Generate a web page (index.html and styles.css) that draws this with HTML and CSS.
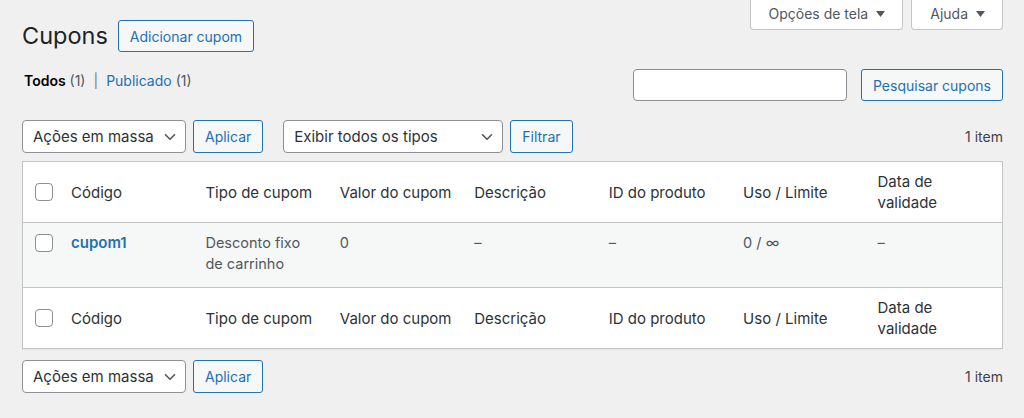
FILE: index.html
```html
<!DOCTYPE html>
<html lang="pt-BR">
<head>
<meta charset="utf-8">
<title>Cupons</title>
<link rel="stylesheet" href="styles.css">
</head>
<body>
<div class="wrap">
  <div class="screen-meta-links">
    <button class="meta-tab">Opções de tela <svg class="tri" width="9" height="6" viewBox="0 0 9 6"><path d="M0 0h9L4.5 6z"/></svg></button>
    <button class="meta-tab">Ajuda <svg class="tri" width="9" height="6" viewBox="0 0 9 6"><path d="M0 0h9L4.5 6z"/></svg></button>
  </div>
  <div class="heading">
    <h1 class="title">Cupons</h1>
    <a class="btn title-action" href="#">Adicionar cupom</a>
  </div>
  <div class="filter-row">
    <ul class="subsubsub">
      <li><span class="current">Todos</span> <span class="count">(1)</span></li>
      <li class="sep">|</li>
      <li><a href="#">Publicado</a> <span class="count">(1)</span></li>
    </ul>
    <div class="search-box">
      <input class="search-input" type="search" aria-label="Pesquisar">
      <button class="btn">Pesquisar cupons</button>
    </div>
  </div>

  <div class="tablenav top">
    <div class="select w-bulk"><span>Ações em massa</span><svg class="chev" width="12" height="8" viewBox="0 0 12 8"><path d="M1.5 1.8 6 6.2l4.5-4.4"/></svg></div>
    <button class="btn">Aplicar</button>
    <div class="select w-type"><span>Exibir todos os tipos</span><svg class="chev" width="12" height="8" viewBox="0 0 12 8"><path d="M1.5 1.8 6 6.2l4.5-4.4"/></svg></div>
    <button class="btn">Filtrar</button>
    <div class="count-items">1 item</div>
  </div>

  <table class="list">
    <colgroup><col class="c-check"><col><col><col><col><col><col><col></colgroup>
    <thead>
      <tr>
        <td class="check"><span class="cb"></span></td>
        <th>Código</th><th>Tipo de cupom</th><th>Valor do cupom</th><th>Descrição</th><th>ID do produto</th><th>Uso / Limite</th><th>Data de validade</th>
      </tr>
    </thead>
    <tbody>
      <tr>
        <td class="check"><span class="cb"></span></td>
        <td><a class="code" href="#">cupom1</a></td>
        <td>Desconto fixo de carrinho</td>
        <td>0</td>
        <td>–</td>
        <td>–</td>
        <td>0 / ∞</td>
        <td>–</td>
      </tr>
    </tbody>
    <tfoot>
      <tr>
        <td class="check"><span class="cb"></span></td>
        <th>Código</th><th>Tipo de cupom</th><th>Valor do cupom</th><th>Descrição</th><th>ID do produto</th><th>Uso / Limite</th><th>Data de validade</th>
      </tr>
    </tfoot>
  </table>

  <div class="tablenav bottom">
    <div class="select w-bulk"><span>Ações em massa</span><svg class="chev" width="12" height="8" viewBox="0 0 12 8"><path d="M1.5 1.8 6 6.2l4.5-4.4"/></svg></div>
    <button class="btn">Aplicar</button>
    <div class="count-items">1 item</div>
  </div>
</div>
</body>
</html>
```
FILE: styles.css
```css
* { box-sizing: border-box; }
html, body { margin: 0; padding: 0; }
body {
  background: #f0f0f1;
  color: #3c434a;
  font-family: Inter, "Noto Sans", "Liberation Sans", sans-serif;
  font-size: 15px;
  line-height: 21px;
  width: 1024px;
  height: 418px;
  overflow: hidden;
}
.wrap { padding: 0 21px 0 22px; }

.screen-meta-links {
  float: right;
  display: flex;
  gap: 8px;
}
.meta-tab {
  display: flex;
  align-items: center;
  gap: 8px;
  height: 30px;
  padding: 0 17px 2px 18px;
  background: #fff;
  border: 1px solid #c3c4c7;
  border-top: none;
  border-radius: 0 0 4px 4px;
  font: inherit;
  font-size: 14px;
  color: #50575e;
}
.meta-tab .tri { fill: #50575e; }

.heading {
  display: flex;
  align-items: center;
  gap: 10px;
  padding-top: 20px;
  height: 52px;
}
.title {
  margin: 0;
  font-size: 23.5px;
  font-weight: 400;
  color: #1d2327;
  line-height: 32px;
}
.btn {
  display: inline-flex;
  align-items: center;
  justify-content: center;
  height: 32px;
  padding: 0 11px;
  border: 1px solid #2271b1;
  border-radius: 3px;
  background: #f6f7f7;
  color: #2271b1;
  font: inherit;
  font-size: 14px;
  text-decoration: none;
  white-space: nowrap;
}

.filter-row {
  display: flex;
  justify-content: space-between;
  align-items: flex-start;
  margin-top: 17px;
}
.subsubsub {
  list-style: none;
  margin: 0;
  padding: 1px 0 0 2px;
  display: flex;
  gap: 6px;
  font-size: 14px;
  line-height: 21px;
}
.subsubsub .current { font-weight: 600; color: #000; }
.subsubsub .count { color: #50575e; }
.subsubsub .sep { color: #787c82; margin: 0 2px; }
.subsubsub a { color: #2271b1; text-decoration: none; }

.search-box { display: flex; gap: 14px; }
.search-input {
  width: 214px;
  height: 32px;
  border: 1px solid #8c8f94;
  border-radius: 4px;
  background: #fff;
  margin: 0;
  padding: 0 8px;
}

.tablenav {
  display: flex;
  align-items: center;
  height: 33px;
}
.tablenav.top { margin-top: 19px; }
.tablenav.bottom { margin-top: 11px; }
.tablenav .btn { margin-left: 7px; height: 33px; }
.select {
  display: flex;
  align-items: center;
  justify-content: space-between;
  height: 33px;
  padding: 0 9px 0 10px;
  background: #fff;
  border: 1px solid #8c8f94;
  border-radius: 4px;
  color: #2c3338;
}
.select .chev { fill: none; stroke: #50575e; stroke-width: 1.6; stroke-linecap: round; stroke-linejoin: round; }
.w-bulk { width: 164px; }
.w-type { width: 220px; margin-left: 20px; }
.count-items { margin-left: auto; color: #3c434a; font-size: 14px; }

.list {
  margin-top: 8px;
  width: 100%;
  table-layout: fixed;
  border-collapse: separate;
  border-spacing: 0;
  background: #fff;
  border: 1px solid #c3c4c7;
  box-shadow: 0 1px 1px rgba(0,0,0,.04);
}
.c-check { width: 38px; }
.list th, .list td {
  text-align: left;
  font-weight: 400;
  padding: 9px 10px;
  line-height: 21px;
}
.list thead th, .list tfoot th { color: #2c3338; vertical-align: middle; }
.list thead th, .list thead td { border-bottom: 1px solid #c3c4c7; }
.list tfoot th, .list tfoot td { border-top: 1px solid #c3c4c7; }
.list tbody td { vertical-align: top; background: #f6f7f7; color: #50575e; font-size: 14.5px; padding-bottom: 13px; }
.list td.check { padding: 0 0 0 12px; vertical-align: middle; }
.list tbody td.check { vertical-align: top; padding-top: 11px; }
.cb {
  display: block;
  width: 18px;
  height: 18px;
  border: 1px solid #8c8f94;
  border-radius: 4px;
  background: #fff;
}
.code { color: #2271b1; font-weight: 600; text-decoration: none; font-size: 15px; }
```
